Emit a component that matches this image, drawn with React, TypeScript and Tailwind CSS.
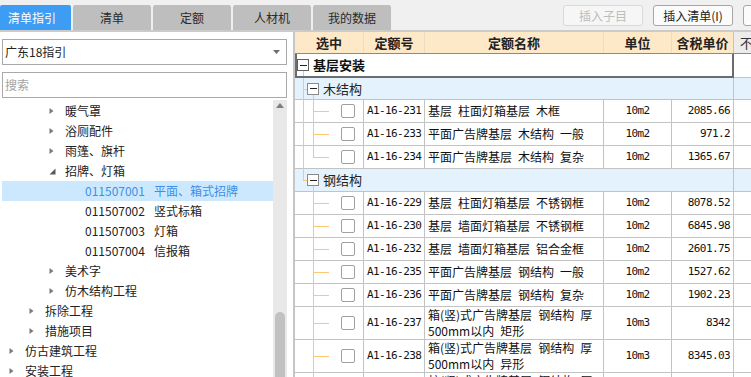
import React from 'react';

type TreeItem = {
  level: 1 | 2 | 3 | 4;
  text: string;
  code?: string;
  arrow?: 'right' | 'down';
  selected?: boolean;
};

const TREE: TreeItem[] = [
  { level: 3, text: '暖气罩', arrow: 'right' },
  { level: 3, text: '浴厕配件', arrow: 'right' },
  { level: 3, text: '雨篷、旗杆', arrow: 'right' },
  { level: 3, text: '招牌、灯箱', arrow: 'down' },
  { level: 4, code: '011507001', text: '平面、箱式招牌', selected: true },
  { level: 4, code: '011507002', text: '竖式标箱' },
  { level: 4, code: '011507003', text: '灯箱' },
  { level: 4, code: '011507004', text: '信报箱' },
  { level: 3, text: '美术字', arrow: 'right' },
  { level: 3, text: '仿木结构工程', arrow: 'right' },
  { level: 2, text: '拆除工程', arrow: 'right' },
  { level: 2, text: '措施项目', arrow: 'right' },
  { level: 1, text: '仿古建筑工程', arrow: 'right' },
  { level: 1, text: '安装工程', arrow: 'right' },
];

const INDENT: Record<number, string> = {
  1: 'pl-[7px]',
  2: 'pl-[27px]',
  3: 'pl-[47px]',
  4: 'pl-[67px]',
};

function RightArrow() {
  return (
    <svg width="5" height="8" viewBox="0 0 5 8">
      <path d="M0.5 1L4.5 4L0.5 7Z" fill="#7b7b7b" />
    </svg>
  );
}

function DownArrow() {
  return (
    <svg width="7" height="7" viewBox="0 0 7 7">
      <path d="M6.5 0.5V6.5H0.5Z" fill="#5a5a5a" />
    </svg>
  );
}

function TreeRow({ item }: { item: TreeItem }) {
  return (
    <div
      className={`flex h-[20px] shrink-0 items-center whitespace-nowrap text-[12px] ${INDENT[item.level]} ${
        item.selected ? 'bg-[#cce8ff] text-[#3d8fe6]' : 'text-[#222]'
      }`}
    >
      <div className="flex w-[16px] shrink-0 items-center">
        {item.arrow === 'right' && <RightArrow />}
        {item.arrow === 'down' && <DownArrow />}
      </div>
      {item.code && <span className="mr-[9px]">{item.code}</span>}
      <span>{item.text}</span>
    </div>
  );
}

function MinusBox({ dark, className }: { dark?: boolean; className?: string }) {
  return (
    <div
      className={`relative flex h-[12px] w-[12px] shrink-0 items-center justify-center border bg-white ${
        dark ? 'border-[#606060]' : 'border-[#8a8a8a]'
      } ${className ?? ''}`}
    >
      <div className="h-[1px] w-[7px] bg-[#222]" />
    </div>
  );
}

type Data = {
  code: string;
  name: React.ReactNode;
  unit: string;
  price: string;
  tall?: boolean;
  outer?: boolean;
  last?: boolean;
};

const MONO = "font-['DejaVu_Sans_Mono',monospace] text-[11px] tracking-[-0.6px] text-[#111]";

function DataRow({ code, name, unit, price, tall, outer, last }: Data) {
  return (
    <div className={`flex shrink-0 border-b border-[#c3c3c3] bg-white ${tall ? 'h-[33px]' : 'h-[23px]'}`}>
      <div className="relative flex w-[69px] shrink-0 items-center border-r border-[#c3c3c3]">
        {outer && <div className="absolute -bottom-px left-[8px] top-0 w-px bg-[#fbc774]" />}
        <div
          className={`absolute left-[18px] top-0 w-px bg-[#fbc774] ${
            last ? 'h-[12px]' : '-bottom-px'
          }`}
        />
        <div className={`absolute left-[18px] h-px w-[16px] bg-[#fbc774] ${tall ? 'top-[16px]' : 'top-[11px]'}`} />
        <div className="relative ml-[46px] h-[14px] w-[14px] rounded-[2px] border border-[#a0a0a0] bg-white" />
      </div>
      <div className={`flex w-[61px] shrink-0 items-center border-r border-[#c3c3c3] pl-[3px] ${MONO}`}>{code}</div>
      <div className="flex w-[179px] shrink-0 items-center whitespace-nowrap border-r border-[#c3c3c3] pl-[3px] text-[12px] leading-[16px] text-[#111]">
        <div>{name}</div>
      </div>
      <div className={`flex w-[68px] shrink-0 items-center justify-center border-r border-[#c3c3c3] ${MONO}`}>{unit}</div>
      <div className={`flex w-[62px] shrink-0 items-center justify-end border-r border-[#c3c3c3] pr-[3px] ${MONO}`}>{price}</div>
      <div className="w-[80px] shrink-0" />
    </div>
  );
}

function GroupRow({ label, last, tall }: { label: string; last?: boolean; tall?: boolean }) {
  return (
    <div className={`flex shrink-0 border-b border-[#c3c3c3] bg-[#e4f2fd] ${tall ? 'h-[23px]' : 'h-[22px]'}`}>
      <div className="relative flex w-[439px] shrink-0 items-center border-r border-[#c3c3c3]">
        <div className={`absolute left-[8px] top-0 w-px bg-[#fbc774] ${last ? 'h-[12px]' : '-bottom-px'}`} />
        <div className="absolute left-[8px] top-[11px] h-px w-[4px] bg-[#fbc774]" />
        <div className="absolute -bottom-px left-[18px] top-[17px] w-px bg-[#fbc774]" />
        <MinusBox className="ml-[12px]" />
        <span className="relative ml-[4px] text-[13px] text-[#222]">{label}</span>
      </div>
      <div className="w-[80px] shrink-0" />
    </div>
  );
}

const SP = '\u2002';

const WOOD: Data[] = [
  { code: 'A1-16-231', name: `基层${SP}柱面灯箱基层${SP}木框`, unit: '10m2', price: '2085.66' },
  { code: 'A1-16-233', name: `平面广告牌基层${SP}木结构${SP}一般`, unit: '10m2', price: '971.2' },
  { code: 'A1-16-234', name: `平面广告牌基层${SP}木结构${SP}复杂`, unit: '10m2', price: '1365.67', last: true },
];

const STEEL: Data[] = [
  { code: 'A1-16-229', name: `基层${SP}柱面灯箱基层${SP}不锈钢框`, unit: '10m2', price: '8078.52' },
  { code: 'A1-16-230', name: `基层${SP}墙面灯箱基层${SP}不锈钢框`, unit: '10m2', price: '6845.98' },
  { code: 'A1-16-232', name: `基层${SP}墙面灯箱基层${SP}铝合金框`, unit: '10m2', price: '2601.75' },
  { code: 'A1-16-235', name: `平面广告牌基层${SP}钢结构${SP}一般`, unit: '10m2', price: '1527.62' },
  { code: 'A1-16-236', name: `平面广告牌基层${SP}钢结构${SP}复杂`, unit: '10m2', price: '1902.23' },
  {
    code: 'A1-16-237',
    name: (
      <>
        箱(竖)式广告牌基层{SP}钢结构{SP}厚
        <br />
        500mm以内{SP}矩形
      </>
    ),
    unit: '10m3',
    price: '8342',
    tall: true,
  },
  {
    code: 'A1-16-238',
    name: (
      <>
        箱(竖)式广告牌基层{SP}钢结构{SP}厚
        <br />
        500mm以内{SP}异形
      </>
    ),
    unit: '10m3',
    price: '8345.03',
    tall: true,
  },
  {
    code: 'A1-16-239',
    name: (
      <>
        柱(竖)式广告牌基层{SP}钢结构{SP}厚
        <br />
        500mm以外{SP}矩形
      </>
    ),
    unit: '10m3',
    price: '8402.16',
    tall: true,
  },
];

export default function App() {
  return (
    <div className="flex h-[377px] w-[751px] flex-col overflow-hidden bg-white font-['Noto_Sans_CJK_SC','Noto_Sans',sans-serif]">
      {/* top bar */}
      <div className="flex h-[32px] shrink-0 border-b-2 border-[#cbcbcb] bg-[#f0f0f0]">
        <div className="flex shrink-0 gap-[2px] self-end">
          <div className="flex h-[25px] w-[71px] items-center rounded-t-[2px] bg-[#3d9cf4] pl-[8px] text-[12px] text-white">
            清单指引
          </div>
          {['清单', '定额', '人材机', '我的数据'].map((t) => (
            <div
              key={t}
              className="flex h-[25px] w-[78px] items-center justify-center rounded-t-[2px] bg-[#bebebe] text-[12px] text-[#2a2a2a]"
            >
              {t}
            </div>
          ))}
        </div>
        <div className="ml-[172px] mt-[5px] flex shrink-0 gap-[10px] self-start">
          <div className="flex h-[21px] w-[80px] items-center justify-center rounded-[3px] border border-[#d9d9d9] bg-[#f6f6f6] text-[12px] text-[#bdbdbd]">
            插入子目
          </div>
          <div className="flex h-[21px] w-[80px] items-center justify-center rounded-[3px] border border-[#a6a6a6] bg-[#fbfbfb] text-[12px] text-[#222]">
            插入清单(I)
          </div>
          <div className="flex h-[21px] w-[80px] items-center justify-center rounded-[3px] border border-[#a6a6a6] bg-[#fbfbfb] text-[12px] text-[#222]" />
        </div>
      </div>

      {/* body */}
      <div className="flex min-h-0 flex-1">
        {/* left panel */}
        <div className="flex w-[287px] shrink-0 flex-col pl-[2px] pt-[7px]">
          <div className="flex h-[26px] shrink-0 items-center justify-between border border-[#a9a9a9] bg-white pl-[2px] pr-[6px] text-[12px] text-[#222]">
            <span>广东18指引</span>
            <svg width="7" height="4" viewBox="0 0 7 4">
              <path d="M0 0H7L3.5 4Z" fill="#6e6e6e" />
            </svg>
          </div>
          <div className="mt-[7px] flex h-[26px] shrink-0 items-center border border-[#a9a9a9] bg-white pl-[2px] text-[12px] text-[#a3a3a3]">
            搜索
          </div>
          <div className="mt-[2px] flex min-h-0 flex-1">
            <div className="flex min-w-0 flex-1 flex-col overflow-hidden pt-[1px]">
              {TREE.map((it, i) => (
                <TreeRow key={i} item={it} />
              ))}
            </div>
            <div className="flex w-[14px] shrink-0 flex-col items-center bg-[#e8e8e8]">
              <svg className="mt-[3px] shrink-0" width="8" height="5" viewBox="0 0 8 5">
                <path d="M0 5L4 0L8 5Z" fill="#7d7d7d" />
              </svg>
              <div className="flex-1" />
              <div className="h-[65px] w-[10px] shrink-0 rounded-t-[5px] bg-[#c1c1c1]" />
            </div>
          </div>
        </div>

        {/* splitter */}
        <div className="w-[8px] shrink-0 border-r-2 border-[#c6c6c6] bg-white" />

        {/* right table */}
        <div className="min-w-0 flex-1 overflow-hidden">
          <div className="flex w-[519px] flex-col">
            <div className="flex h-[22px] shrink-0 border-b border-[#4f98e0] text-[13px] text-[#222]">
              <div className="flex w-[69px] shrink-0 items-center justify-center border-r border-[#ecdcc6] bg-[#fde8c8] font-bold">选中</div>
              <div className="flex w-[61px] shrink-0 items-center justify-center border-r border-[#ecdcc6] bg-[#fde8c8] font-bold">定额号</div>
              <div className="flex w-[179px] shrink-0 items-center justify-center border-r border-[#ecdcc6] bg-[#fde8c8] font-bold">定额名称</div>
              <div className="flex w-[68px] shrink-0 items-center justify-center border-r border-[#ecdcc6] bg-[#fde8c8] font-bold">单位</div>
              <div className="flex w-[62px] shrink-0 items-center justify-center border-r border-[#c3c3c3] bg-[#fde8c8] font-bold">含税单价</div>
              <div className="flex w-[80px] shrink-0 items-center whitespace-nowrap bg-[#ececec] pl-[6px] text-[#333]">不含税单价</div>
            </div>

            <div className="flex h-[24px] shrink-0">
              <div className="relative flex w-[439px] shrink-0 items-center border-x-2 border-b-2 border-[#6c6c6c] bg-white">
                <div className="absolute bottom-0 left-[6px] top-[17px] w-px bg-[#fbc774]" />
                <MinusBox dark />
                <span className="relative ml-[4px] text-[13px] font-bold text-[#111]">基层安装</span>
              </div>
              <div className="w-[80px] shrink-0 border-b border-[#c3c3c3]" />
            </div>

            <GroupRow label="木结构" />
            {WOOD.map((d) => (
              <DataRow key={d.code} {...d} outer />
            ))}
            <GroupRow label="钢结构" last tall />
            {STEEL.map((d) => (
              <DataRow key={d.code} {...d} />
            ))}
          </div>
        </div>
      </div>
    </div>
  );
}
